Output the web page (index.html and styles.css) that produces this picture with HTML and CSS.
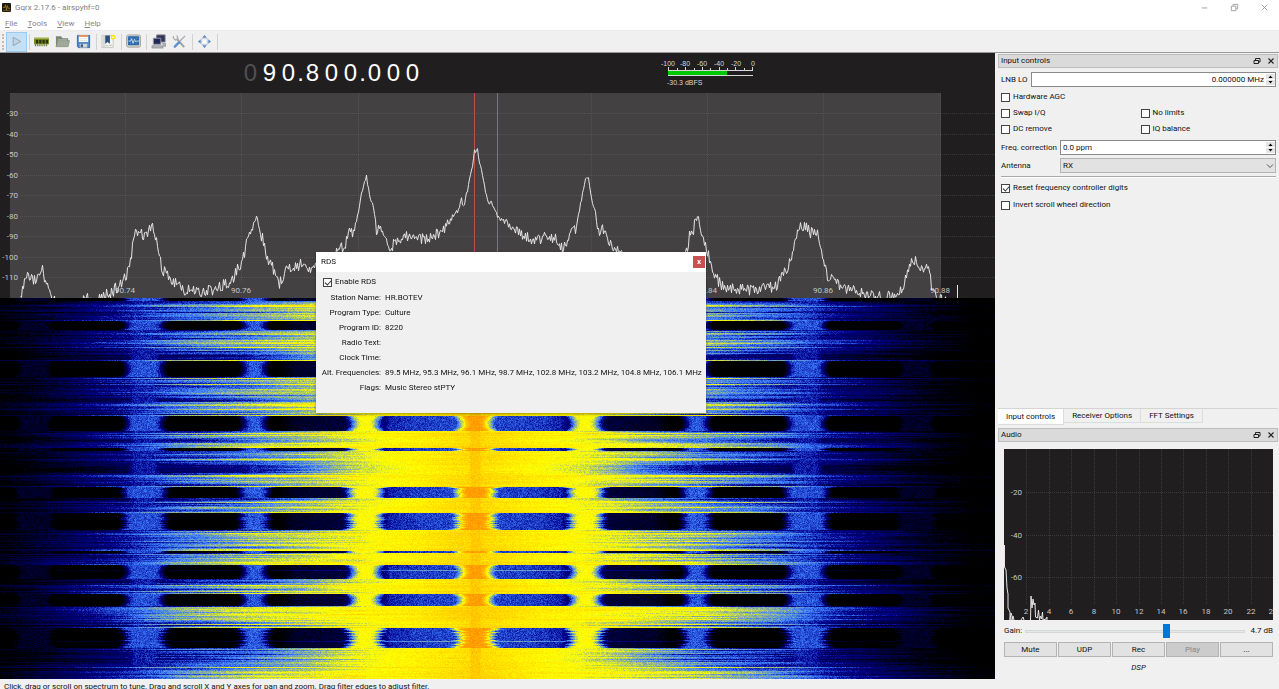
FILE: index.html
```html
<!DOCTYPE html>
<html lang="en">
<head>
<meta charset="utf-8">
<title>Gqrx 2.17.6 - airspyhf=0</title>
<link rel="stylesheet" href="styles.css">
</head>
<body>
<header class="titlebar">
  <svg class="app-icon" viewBox="0 0 10 10"><rect width="10" height="10" rx="1" fill="#1d1a12"/><path d="M1 5h2l1-3 1 6 1-5 1 3h2" fill="none" stroke="#b58a20" stroke-width=".8"/><path d="M1 8.500h8" stroke="#7a5a14"/></svg>
  <h1 class="app-title">Gqrx 2.17.6 - airspyhf=0</h1>
  <div class="window-buttons">
    <button aria-label="Minimize"><svg viewBox="0 0 10 10"><path d="M2 5.500h6" stroke="#9a9a9a"/></svg></button>
    <button aria-label="Restore"><svg viewBox="0 0 10 10"><path d="M1.500 3.500h5v5h-5zM3.500 3V1.500h5v5H7" fill="none" stroke="#9a9a9a"/></svg></button>
    <button aria-label="Close"><svg viewBox="0 0 10 10"><path d="M2 2l6 6M8 2l-6 6" stroke="#9a9a9a"/></svg></button>
  </div>
</header>
<nav class="menubar">
  <a href="#file"><u>F</u>ile</a><a href="#tools"><u>T</u>ools</a><a href="#view"><u>V</u>iew</a><a href="#help"><u>H</u>elp</a>
</nav>
<div class="toolbar">
  <button class="tool tool-active" aria-label="Start DSP"><svg viewBox="0 0 16 16"><path d="M4.500 3.500v9l8-4.500z" fill="#c3d2dc" stroke="#8fa3b1"/></svg></button>
  <span class="sep"></span>
  <button class="tool" aria-label="I/O devices"><svg viewBox="0 0 16 16"><path d="M0 4h16v7H0z" fill="#7d9220"/><path d="M0 4h16v1.500H0z" fill="#a3b54a"/><path d="M2 6h2.500v4H2zM5.500 6H8v4H5.500zM9 6h2.500v4H9zM12.500 6H15v4h-2.500z" fill="#2c3310"/><path d="M1 12h14" stroke="#5b6a18" stroke-width="2" stroke-dasharray="1 1"/></svg></button>
  <button class="tool" aria-label="Open settings"><svg viewBox="0 0 16 16"><path d="M1 13V2.500h5.500L8 4.500h6V7" fill="#7c8676"/><path d="M3 6h10v5H3z" fill="#dfe2dc"/><path d="M1 13.500L3 7h12.500l-1.500 6.500z" fill="#a0aa9a" stroke="#79836f" stroke-width=".6"/></svg></button>
  <button class="tool" aria-label="Save settings"><svg viewBox="0 0 16 16"><path d="M1.500 1.500h13v13h-12l-1-1z" fill="#5288cc" stroke="#3465a4"/><path d="M3 1.500h10v7H3z" fill="#fff"/><path d="M3 1.500h10V3H3z" fill="#ef7b2c"/><path d="M4 5h8M4 7h8" stroke="#d4d7d0" stroke-width=".7"/><path d="M4 10.500h8v4H4z" fill="#d3d7cf"/><path d="M5 11h2.500v3H5z" fill="#365f94"/></svg></button>
  <span class="sep"></span>
  <button class="tool" aria-label="Bookmarks"><svg viewBox="0 0 16 16"><path d="M1 1.500h12v13H1z" fill="#f4f4f0" stroke="#babdb6" stroke-width=".8"/><path d="M2 2h2.500v12H2z" fill="#d5d8d2"/><path d="M4.500 1.500h5v9L7 8.500l-2.500 2z" fill="#2f4f7f"/><path d="M9 12h3M5 12.500h3" stroke="#babdb6"/><circle cx="13" cy="3.500" r="2.600" fill="#f5e11c"/><circle cx="13" cy="3.500" r="1" fill="#fffbd0"/></svg></button>
  <span class="sep"></span>
  <button class="tool" aria-label="Bandwidth monitor"><svg viewBox="0 0 16 16"><rect x=".5" y="1" width="15" height="13" rx="2" fill="#d3d7cf" stroke="#85897f" stroke-width=".7"/><rect x="2" y="2.500" width="12" height="9.500" rx="1" fill="#2765ad"/><path d="M2 4.500h12M2 9.500h12M5 3v9M11 3v9" stroke="#5c94d0" stroke-width=".4"/><path d="M2.500 7.500H5L6 5l1.500 5L9 5.500l1.200 3 1-1H14" fill="none" stroke="#e8f8e8" stroke-width=".8"/></svg></button>
  <span class="sep"></span>
  <button class="tool" aria-label="Remote control"><svg viewBox="0 0 16 16"><path d="M6 1h9v7.500H6z" fill="#30345a" stroke="#7a7d85"/><path d="M2.500 4.500h8v6.500h-8z" fill="#22285c" stroke="#9a9ca4"/><path d="M1 12.500h11l1 2.500H1zM12.500 10h3l.5 3h-3z" fill="#b6b9be" stroke="#73767b" stroke-width=".6"/></svg></button>
  <button class="tool" aria-label="Remote settings"><svg viewBox="0 0 16 16"><path d="M5 5l8 9" stroke="#9b9fa3" stroke-width="2"/><path d="M1.500 2v2.500L4 6.500l2.500-2L5 1.500" fill="none" stroke="#b1b5b9" stroke-width="1.400"/><path d="M14 2L8.500 7.500" stroke="#a8acb0" stroke-width="1.400"/><path d="M7.500 9L3 13.500" stroke="#5f92cc" stroke-width="2.600" stroke-linecap="round"/></svg></button>
  <span class="sep"></span>
  <button class="tool" aria-label="Full screen"><svg viewBox="0 0 16 16"><path d="M5 5h6v6H5z" fill="#fdfdfd" stroke="#b9c6d8"/><path d="M8 1l2.500 3h-5zM8 15l2.500-3h-5zM1 8l3-2.500v5zM15 8l-3-2.500v5z" fill="#5d8ac4"/></svg></button>
  <span class="sep"></span>
</div>

<main class="workspace">
  <section class="receiver">
    <div class="tuner">
      <div class="freq" aria-label="Frequency"><span class="digit off">0</span><span class="digit">9</span><span class="digit">0</span><span class="dot">.</span><span class="digit">8</span><span class="digit">0</span><span class="digit">0</span><span class="dot">.</span><span class="digit">0</span><span class="digit">0</span><span class="digit">0</span></div>
      <svg class="meter" viewBox="0 0 98 30">
        <g class="meter-text"><text x="8" y="8">-100</text><text x="25" y="8">-80</text><text x="42" y="8">-60</text><text x="59" y="8">-40</text><text x="76" y="8">-20</text><text x="93" y="8">0</text></g>
        <path d="M8.500 9v3M25.500 9v3M42.500 9v3M59.500 9v3M75.500 9v3M92.500 9v3M17.500 10v2M34.500 10v2M50.500 10v2M67.500 10v2M84.500 10v2M8 12.500h85M8 17.500h85" stroke="#d8d8d8"/>
        <path d="M8 13h59v4H8z" fill="#00c800"/>
        <text class="meter-level" x="7" y="27">-30.3 dBFS</text>
      </svg>
    </div>
    <svg class="spectrum" viewBox="0 0 995 205" id="spectrum">
      <rect x="10" y="0" width="931" height="205" fill="#434142"/>
      <g id="grid" stroke="#9a9a9a" stroke-opacity=".2" stroke-dasharray="1 1"></g>
      <path d="M497.500 0v205" stroke="#77777d"/>
      <path d="M474.500 0v205" stroke="#c0504d"/>
      <g id="spectrum-labels" class="plot-text"></g>
      <path id="trace" fill="none" stroke="#e6e6e6"/>
    </svg>
    <canvas class="waterfall" id="waterfall"></canvas>

    <section class="rds" role="dialog" aria-label="RDS">
      <div class="rds-title"><span>RDS</span><button class="rds-close" aria-label="Close RDS">x</button></div>
      <div class="rds-body">
        <label class="check"><input type="checkbox" checked>Enable RDS</label>
        <dl class="rds-list">
          <dt>Station Name:</dt><dd>HR.BOTEV</dd>
          <dt>Program Type:</dt><dd>Culture</dd>
          <dt>Program ID:</dt><dd>8220</dd>
          <dt>Radio Text:</dt><dd></dd>
          <dt>Clock Time:</dt><dd></dd>
          <dt>Alt. Frequencies:</dt><dd>89.5 MHz, 95.3 MHz, 96.1 MHz, 98.7 MHz, 102.8 MHz, 103.2 MHz, 104.8 MHz, 106.1 MHz</dd>
          <dt>Flags:</dt><dd>Music Stereo stPTY</dd>
        </dl>
      </div>
    </section>
  </section>

  <aside class="docks">
    <section class="dock dock-input">
      <div class="dock-title"><h2>Input controls</h2>
        <button aria-label="Float input controls"><svg viewBox="0 0 8 8"><path d="M1 3.500h4.500v3H1zM2.500 3V1.500H7v3.500H6" fill="none" stroke="#222"/></svg></button>
        <button aria-label="Close input controls"><svg viewBox="0 0 8 8"><path d="M1.500 1.500l5 5M6.500 1.500l-5 5" stroke="#222" stroke-width="1.200"/></svg></button></div>
      <form class="controls">
        <div class="field"><label for="lnb">LNB LO</label><div class="spin"><input id="lnb" class="right" value="0.000000 MHz"><span class="steps"><button type="button" aria-label="Increase LNB LO"><svg viewBox="0 0 7 5"><path d="M1.500 4L3.500 1.500 5.500 4z"/></svg></button><button type="button" aria-label="Decrease LNB LO"><svg viewBox="0 0 7 5"><path d="M1.500 1L3.500 3.500 5.500 1z"/></svg></button></span></div></div>
        <div class="checks">
          <label class="check wide"><input type="checkbox">Hardware AGC</label>
          <label class="check"><input type="checkbox">Swap I/Q</label>
          <label class="check"><input type="checkbox">No limits</label>
          <label class="check"><input type="checkbox">DC remove</label>
          <label class="check"><input type="checkbox">IQ balance</label>
        </div>
        <div class="field aligned"><label for="ppm">Freq. correction</label><div class="spin"><input id="ppm" value="0.0 ppm"><span class="steps"><button type="button" aria-label="Increase correction"><svg viewBox="0 0 7 5"><path d="M1.500 4L3.500 1.500 5.500 4z"/></svg></button><button type="button" aria-label="Decrease correction"><svg viewBox="0 0 7 5"><path d="M1.500 1L3.500 3.500 5.500 1z"/></svg></button></span></div></div>
        <div class="field aligned"><label for="antenna">Antenna</label><div class="combo"><select id="antenna"><option>RX</option></select><svg viewBox="0 0 8 8"><path d="M1 2.500l3 3 3-3" fill="none" stroke="#555"/></svg></div></div>
        <hr>
        <div class="options">
          <label class="check"><input type="checkbox" checked>Reset frequency controller digits</label>
          <label class="check"><input type="checkbox">Invert scroll wheel direction</label>
        </div>
      </form>
    </section>
    <div class="tabs" role="tablist">
      <button role="tab" aria-selected="true" class="tab current">Input controls</button><button role="tab" class="tab">Receiver Options</button><button role="tab" class="tab">FFT Settings</button>
    </div>
    <section class="dock">
      <div class="dock-title"><h2>Audio</h2>
        <button aria-label="Float audio"><svg viewBox="0 0 8 8"><path d="M1 3.500h4.500v3H1zM2.500 3V1.500H7v3.500H6" fill="none" stroke="#222"/></svg></button>
        <button aria-label="Close audio"><svg viewBox="0 0 8 8"><path d="M1.500 1.500l5 5M6.500 1.500l-5 5" stroke="#222" stroke-width="1.200"/></svg></button></div>
      <div class="audio">
        <svg class="audio-plot" viewBox="0 0 269 171">
          <g id="audio-grid" stroke="#9a9a9a" stroke-opacity=".22" stroke-dasharray="1 1"></g>
          <g id="audio-labels" class="plot-text"></g>
          <path d="M.5 96v22L2 121l1 18 1 6v14l2 4v8l1-7 1 3v4l1-4 1 4M17 171l2-3 1 3M26.500 171l.5-24 1 12 1-9 1 6 1-2 .5 14 2 1 1-8 1 10 1-4 1 3 1-7 .5 8 3-1 1-2v3" fill="none" stroke="#e6e6e6"/>
        </svg>
        <div class="gain"><label for="gain">Gain:</label><input id="gain" type="range" min="0" max="100" value="65"><output>4.7 dB</output></div>
        <div class="audio-buttons"><button>Mute</button><button>UDP</button><button>Rec</button><button disabled>Play</button><button>...</button></div>
        <p class="dsp">DSP</p>
      </div>
    </section>
  </aside>
</main>
<footer class="statusbar">Click, drag or scroll on spectrum to tune. Drag and scroll X and Y axes for pan and zoom. Drag filter edges to adjust filter.</footer>
<script src="plots.js"></script>
</body>
</html>
```
FILE: styles.css
```css
* { box-sizing: border-box; }
body { margin: 0; height: 100vh; display: flex; flex-direction: column; overflow: hidden; background: #f0f0f0; color: #111; font: 8px/12px Roboto, "Open Sans", sans-serif; }
button, input, select { font: inherit; color: inherit; margin: 0; padding: 0; border: 0; background: none; }
h1, h2, p, dl, dd { margin: 0; font: inherit; }
svg { display: block; }

.titlebar { display: flex; align-items: center; height: 15px; flex: none; background: #fff; color: #808080; padding-left: 2px; gap: 4px; }
.app-icon { width: 9px; height: 9px; }
.app-title { flex: 1; }
.window-buttons { display: flex; }
.window-buttons button { width: 30px; display: flex; justify-content: center; }
.window-buttons svg { width: 9px; height: 9px; }
.menubar { display: flex; height: 15px; flex: none; background: #fff; gap: 10px; padding: 3px 5px 0; }
.menubar a { color: #888; text-decoration: none; }
.toolbar { display: flex; align-items: center; height: 23px; flex: none; padding-left: 2px; border-top: 1px solid #eaeaea; border-bottom: 1px solid #999; }
.toolbar::before { content: ""; height: 16px; margin-right: 2px; border-left: 2px dotted #bdbdbd; }
.tool { width: 21px; height: 20px; display: flex; align-items: center; justify-content: center; }
.tool svg { width: 15px; height: 15px; }
.tool-active { background: #c5e0f5; border: 1px solid #9accf2; }
.sep { width: 1px; height: 16px; margin: 0 1px 0 2px; background: #d2d2d2; }

.workspace { flex: 1; min-height: 0; display: flex; }
.receiver { position: relative; flex: 1; min-width: 0; display: flex; flex-direction: column; background: #201e1f; }
.tuner { display: flex; align-items: center; justify-content: space-between; height: 40px; flex: none; padding: 0 237px 0 241px; }
.freq { display: flex; font: 24px/40px "Liberation Sans", Arial, sans-serif; color: #fff; }
.digit { width: 19px; text-align: center; }
.dot { width: 5px; display: flex; justify-content: center; }
.off { color: #505050; }
.meter { width: 98px; height: 30px; }
.meter-text, .meter-level { font: 7px "Liberation Sans", Arial, sans-serif; fill: #d8d8d8; }
.meter-text { text-anchor: middle; }
.spectrum { width: 100%; flex: none; }
.plot-text { fill: #c6c6c6; font-size: 8px; }
.waterfall { flex: 1; min-height: 0; width: 100%; background: #000; }

.rds { position: absolute; left: 316px; top: 199px; width: 390px; background: #f0f0f0; box-shadow: 0 1px 3px rgba(0, 0, 0, .4); }
.rds-title { display: flex; align-items: center; justify-content: space-between; height: 20px; padding: 0 1px 0 5px; background: #fff; }
.rds-close { width: 12px; height: 12px; background: #c75050; color: #fff; line-height: 10px; font-weight: bold; }
.rds-body { padding: 4px 7px 18px; }
.rds-list { display: grid; grid-template-columns: 58px 1fr; column-gap: 4px; margin-top: 2px; line-height: 15px; white-space: nowrap; }
.rds-list dt { display: flex; justify-content: flex-end; }

.check { display: flex; align-items: center; gap: 3px; white-space: nowrap; }
.check input { appearance: none; position: relative; width: 9px; height: 9px; flex: none; border: 1px solid #444; background: #fff; }
.check input:checked::after { content: ""; position: absolute; left: 2px; top: 0; width: 3px; height: 5px; border: solid #333; border-width: 0 1px 1px 0; transform: rotate(42deg); }

.docks { width: 284px; flex: none; display: flex; flex-direction: column; padding: 1px 1px 0 3px; }
.dock-input { flex: 1; }
.dock-title { display: flex; align-items: center; height: 14px; padding: 0 2px; gap: 6px; background: #dadada; border: 1px solid #bdbdbd; }
.dock-title h2 { flex: 1; }
.dock-title button, .dock-title svg { width: 8px; height: 8px; }
.controls { display: flex; flex-direction: column; gap: 3px; padding: 4px 2px 0 3px; }
.field { display: flex; align-items: center; gap: 3px; height: 15px; }
.aligned label { width: 56px; white-space: nowrap; }
.spin { flex: 1; min-width: 0; height: 15px; display: flex; background: #fff; border: 1px solid #8a8a8a; }
.spin input { flex: 1; min-width: 0; padding: 0 2px; }
.right { text-align: right; }
.steps { width: 9px; display: grid; grid-template-rows: 1fr 1fr; gap: 1px; padding: 1px 0; }
.steps button { background: #e4e4e4; display: grid; place-items: center; overflow: hidden; }
.steps svg { width: 7px; height: 5px; }
.combo { flex: 1; height: 15px; display: flex; align-items: center; background: #e2e2e2; border: 1px solid #b4b4b4; padding-right: 1px; }
.combo select { appearance: none; flex: 1; padding-left: 2px; }
.combo svg { width: 8px; height: 8px; }
.checks { display: grid; grid-template-columns: 1fr 1fr; column-gap: 4px; row-gap: 4px; padding: 1px 0 2px; }
.wide { grid-column: 1 / 3; }
.controls hr { width: 100%; margin: 0; border: 0; border-top: 1px solid #a8a8a8; border-bottom: 1px solid #fff; }
.options { display: grid; gap: 5px; padding-top: 1px; }

.tabs { display: flex; align-items: flex-start; border-top: 1px solid #d4d4d4; margin-bottom: 3px; }
.tab { height: 14px; padding: 0 8px; border: solid #dcdcdc; border-width: 0 1px 1px 0; }
.current { height: 16px; background: #fff; }
.audio { display: flex; flex-direction: column; padding: 7px 5px 4px 6px; }
.audio-plot { width: 100%; background: #201e1f; }
.gain { display: flex; align-items: center; gap: 3px; height: 22px; }
.gain input { appearance: none; flex: 1; min-width: 0; height: 15px; }
.gain input::-webkit-slider-runnable-track { height: 3px; background: #e6e9e9; border: 1px solid #d5d8d8; }
.gain input::-webkit-slider-thumb { appearance: none; width: 7px; height: 14px; margin-top: -7px; background: #0078d7; }
.gain output { width: 25px; text-align: right; }
.audio-buttons { display: grid; grid-template-columns: repeat(5, 1fr); gap: 1px; }
.audio-buttons button { height: 15px; background: #e2e2e2; border: 1px solid #b4b4b4; }
.audio-buttons button:disabled { background: #cccccc; color: #888; }
.dsp { text-align: center; font-style: italic; padding-top: 5px; height: 18px; }
.statusbar { flex: none; height: 10px; padding: 2px 4px 0; overflow: hidden; white-space: nowrap; }
```
FILE: plots.js
```js
const NS = "http://www.w3.org/2000/svg";
let seed = 4711;
function rnd() {
  seed = (seed + 0x6d2b79f5) | 0;
  let t = Math.imul(seed ^ (seed >>> 15), 1 | seed);
  t = (t + Math.imul(t ^ (t >>> 7), 61 | t)) ^ t;
  return ((t ^ (t >>> 14)) >>> 0) / 4294967296;
}
function interp(points, x) {
  if (x <= points[0][0]) return points[0][1];
  for (let i = 1; i < points.length; i++) {
    const [x1, y1] = points[i], [x0, y0] = points[i - 1];
    if (x <= x1) return y0 + (y1 - y0) * (x - x0) / (x1 - x0);
  }
  return points[points.length - 1][1];
}
function add(parent, name, attrs, text) {
  const node = document.createElementNS(NS, name);
  for (const key in attrs) node.setAttribute(key, attrs[key]);
  if (text !== undefined) node.textContent = text;
  document.getElementById(parent).append(node);
}

/* Spectrum axes */
for (let i = 0; i < 9; i++) {
  const y = Math.round(20 + i * 20.55);
  add("grid", "path", { d: `M20 ${y + .5}H995` });
  add("spectrum-labels", "text", { x: 18, y: y + 3, "text-anchor": "end" }, -30 - i * 10);
}
for (let i = 0; i < 8; i++) {
  const x = Math.round(125 + i * 116.4);
  add("grid", "path", { d: `M${x + .5} 0V190` });
  add("spectrum-labels", "text", { x, y: 200, "text-anchor": "middle" }, (90.74 + i * .02).toFixed(2));
}

/* Spectrum trace */
const level = [[20,298],[23,288],[25,280],[28,275],[33,281],[38,273],[42,271],[46,283],[52,299],[60,306],[75,304],[90,297],[100,298],[110,293],[118,286],[123,281],[128,270],[132,248],[135,233],[140,231],[144,236],[148,230],[153,228],[157,243],[162,270],[168,277],[175,284],[185,290],[195,291],[210,290],[220,286],[232,280],[238,268],[242,262],[246,243],[250,234],[253,222],[256,217],[258,230],[261,236],[264,243],[267,260],[272,268],[279,284],[284,272],[293,265],[303,265],[314,268],[330,262],[338,250],[343,247],[347,240],[350,228],[353,235],[358,211],[361,195],[364,180],[366,177],[369,195],[371,200],[374,215],[376,230],[380,228],[385,243],[391,247],[396,240],[405,236],[415,236],[425,240],[435,235],[445,228],[452,217],[458,210],[461,198],[463,208],[467,190],[472,168],[474,152],[477,149],[480,168],[483,178],[487,202],[491,202],[495,213],[500,219],[507,223],[516,231],[525,237],[537,240],[545,236],[555,238],[562,249],[568,240],[572,225],[575,232],[580,205],[584,182],[588,177],[591,198],[595,212],[598,233],[602,230],[610,244],[620,253],[672,283],[687,250],[689,235],[693,230],[695,219],[698,217],[701,233],[704,240],[707,252],[711,263],[716,279],[725,288],[735,288],[750,290],[765,287],[775,286],[782,275],[788,265],[793,250],[797,232],[800,226],[805,226],[810,233],[815,230],[818,236],[823,260],[826,275],[832,277],[840,285],[855,292],[870,296],[895,297],[903,288],[907,270],[910,262],[914,260],[920,269],[927,265],[931,285],[935,296],[942,300],[952,306]];
let d = "";
for (let x = 20; x <= 952; x++) {
  const y = interp(level, x);
  const spread = y > 262 ? 12 : y > 222 ? 11 : 5;
  d += `${d ? "L" : "M"}${x + .5} ${(y - 93 + (rnd() - .5) * spread).toFixed(1)}`;
}
document.getElementById("trace").setAttribute("d", d + "M957.5 205V192");

/* Audio axes */
[-20, -40, -60].forEach((db, i) => {
  const y = Math.round(43 + i * 42.7);
  add("audio-grid", "path", { d: `M22 ${y + .5}H269` });
  add("audio-labels", "text", { x: 18, y: y + 3, "text-anchor": "end" }, db);
});
for (let i = 1; i < 13; i++) {
  const x = Math.round(i * 22.42);
  add("audio-grid", "path", { d: `M${x + .5} 0V155` });
  add("audio-labels", "text", { x, y: 165, "text-anchor": "middle" }, i * 2);
}

/* Waterfall */
function colour(v) {
  if (v < 20) return [0, 0, 0];
  if (v < 70) return [0, 0, 140 * (v - 20) / 50];
  if (v < 100) return [60 * (v - 70) / 30, 125 * (v - 70) / 30, 140 + 115 * (v - 70) / 30];
  if (v < 150) return [60 + 195 * (v - 100) / 50, 125 + 130 * (v - 100) / 50, 255 - 255 * (v - 100) / 50];
  return [255, Math.max(0, 255 - 255 * (v - 150) / 100), 0];
}
const gaps = [[0,2],[23,31],[63,78],[118,132],[150,152],[189,199],[215,231],[253,254],[267,280],[296,307],[330,349]];
const ragged = new Set([189, 215, 330]);
const weak = [[0,164],[60,154],[95,146],[130,132],[170,108],[230,82],[330,62],[400,38],[450,20],[500,8]];
const strong = [[0,168],[60,158],[110,154],[160,148],[220,138],[300,110],[350,84],[400,62],[450,38],[500,18]];
const floor = [[0,88],[60,84],[85,78],[95,55],[106,50],[125,42],[180,34],[192,22],[205,8],[520,4]];
const peaks = [[0,188,4],[110,151,3],[221,91,3],[331,89,10],[441,34,11]];

function drawWaterfall() {
  const canvas = document.getElementById("waterfall");
  const w = canvas.width = canvas.clientWidth, h = canvas.height = canvas.clientHeight;
  const ctx = canvas.getContext("2d"), image = ctx.createImageData(w, h);
  let drift = .5;
  for (let y = 0; y < h; y++) {
    const gap = gaps.find(g => y >= g[0] && y <= g[1]);
    let edge = 0, widen = 0;
    if (gap) {
      edge = Math.abs((y - gap[0]) / Math.max(1, gap[1] - gap[0]) * 2 - 1);
      widen = edge ** 3 * 4 + (ragged.has(gap[0]) ? rnd() * 6 : rnd());
    }
    drift += (rnd() - .5) * .7 + (.5 - drift) * .18;
    let s = drift + (rnd() - .5) * .5;
    if (rnd() < .06) s = 1.2;
    if (gaps.some(g => y === g[0] - 1)) s = 1.2;
    if (gaps.some(g => y === g[1] + 1)) s = 0;
    s = Math.min(1.2, Math.max(-.3, s));
    const knots = Array.from({ length: 22 }, () => (rnd() - .5) * 22);
    const gapStripe = y === 272 || y === 343 ? 26 : 0;
    for (let x = 0; x < w; x++) {
      const px = x / w * 995, dist = Math.abs(px - 475);
      let v = interp(floor, dist) + gapStripe * (dist < 420 ? 1 : 0);
      for (const [c, top, half] of peaks) {
        const off = Math.max(0, Math.abs(dist - c) - half - widen);
        const side = off < 4 ? off * 3 : 12 + (off - 4) * 8;
        v = Math.max(v, (gap ? top : top - (c ? 13 : 17)) - side);
      }
      if (!gap) {
        const k = px / 50, i = Math.floor(k), f = k - i;
        const wave = knots[i] * (1 - f) + knots[i + 1] * f;
        const broad = interp(weak, dist) * (1 - s) + interp(strong, dist) * s;
        v = Math.max(v, broad + wave * (dist < 110 ? .3 : 1));
      }
      v += (rnd() + rnd() - 1) * (v < 20 ? 6 : v > 145 ? 8 : 13);
      const c = colour(v), o = (y * w + x) * 4;
      image.data[o] = c[0]; image.data[o + 1] = c[1]; image.data[o + 2] = c[2]; image.data[o + 3] = 255;
    }
  }
  ctx.putImageData(image, 0, 0);
}
drawWaterfall();
```
